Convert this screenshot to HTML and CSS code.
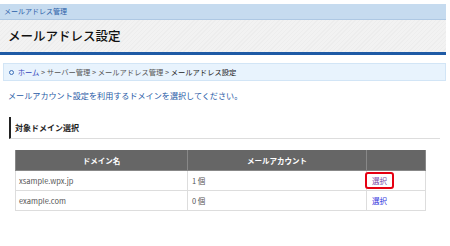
FILE: index.html
```html
<!DOCTYPE html>
<html lang="ja">
<head>
  <meta charset="UTF-8" />
  <title>メールアドレス設定</title>
  <link rel="stylesheet" href="styles.css">
</head>
<body>
  <div class="page">
    <div class="topbar">メールアドレス管理</div>
    <div class="titlebar">
      <h1>メールアドレス設定</h1>
    </div>

    <div class="breadcrumb">
      <span class="dot"></span>
      <a href="#" class="crumb-link">ホーム</a> &gt; サーバー管理 &gt; メールアドレス管理 &gt; <span class="current">メールアドレス設定</span>
    </div>

    <p class="lead">メールアカウント設定を利用するドメインを選択してください。</p>

    <h2 class="section">対象ドメイン選択</h2>

    <table class="domains">
      <thead>
        <tr>
          <th class="col-domain">ドメイン名</th>
          <th class="col-count">メールアカウント</th>
          <th class="col-action"></th>
        </tr>
      </thead>
      <tbody>
        <tr>
          <td>xsample.wpx.jp</td>
          <td>1&nbsp;個</td>
          <td><span class="mark"><a href="#" class="visited">選択</a></span></td>
        </tr>
        <tr>
          <td>example.com</td>
          <td>0&nbsp;個</td>
          <td><a href="#">選択</a></td>
        </tr>
      </tbody>
    </table>
  </div>
</body>
</html>
```

FILE: styles.css
```css
body {
  margin: 0;
  background: #fff;
  font-family: "Noto Sans CJK JP", "Noto Sans", sans-serif;
  color: #333;
}
.page {
  width: 446px;
  padding-top: 4px;
}
.topbar {
  height: 15px;
  line-height: 15px;
  padding-left: 4px;
  font-size: 7px;
  color: #2b5ea8;
  background: #c6dbef;
  border-bottom: 1px solid #aec8e3;
}
.titlebar {
  height: 32px;
  background: repeating-linear-gradient(135deg, #f2f2f2 0, #f2f2f2 2px, #ededed 2px, #ededed 3px);
  border-bottom: 3px solid #1e5aa5;
}
h1 {
  margin: 0;
  padding-left: 8px;
  font-size: 12.5px;
  line-height: 32px;
  font-weight: 500;
  color: #111;
}
.breadcrumb {
  margin: 8px 0 0 3px;
  height: 16px;
  line-height: 16px;
  padding-left: 5px;
  background: #e8f3fd;
  border: 1px solid #d2e5f6;
  font-size: 7.3px;
  color: #555;
}
.dot {
  display: inline-block;
  width: 3px;
  height: 3px;
  border: 1px solid #3c6fb8;
  border-radius: 50%;
  margin-right: 2px;
  vertical-align: 0;
}
.crumb-link {
  color: #3344bb;
  text-decoration: none;
}
.current {
  color: #222;
}
.lead {
  margin: 10px 0 0 8px;
  font-size: 8.1px;
  line-height: 10px;
  color: #1f5aa6;
}
.section {
  margin: 16px 0 0 9px;
  width: 425px;
  height: 21px;
  line-height: 21px;
  padding-left: 4px;
  border-left: 2px solid #222;
  border-bottom: 1px solid #ddd;
  font-size: 8px;
  font-weight: bold;
  color: #222;
}
.domains {
  margin: 11px 0 0 15px;
  width: 411px;
  border-collapse: collapse;
  font-size: 7.5px;
}
.domains th {
  height: 20px;
  padding: 0;
  background: #666;
  color: #fff;
  font-weight: bold;
  border: 1px solid #888;
  border-top: none;
}
.col-domain { width: 171px; }
.col-count { width: 178px; }
.domains td {
  height: 19px;
  padding: 0 0 0 3px;
  border: 1px solid #ddd;
  color: #555;
}
.domains td + td {
  padding-left: 4px;
}
.domains td:last-child {
  padding-left: 5px;
}
.domains a {
  color: #3333dd;
  text-decoration: none;
}
.domains a.visited {
  color: #7a4aa8;
}
.mark {
  display: inline-block;
  margin-left: -7px;
  padding: 1px 5px;
  border: 2px solid #e60012;
  border-radius: 3px;
  line-height: 11px;
}
```
